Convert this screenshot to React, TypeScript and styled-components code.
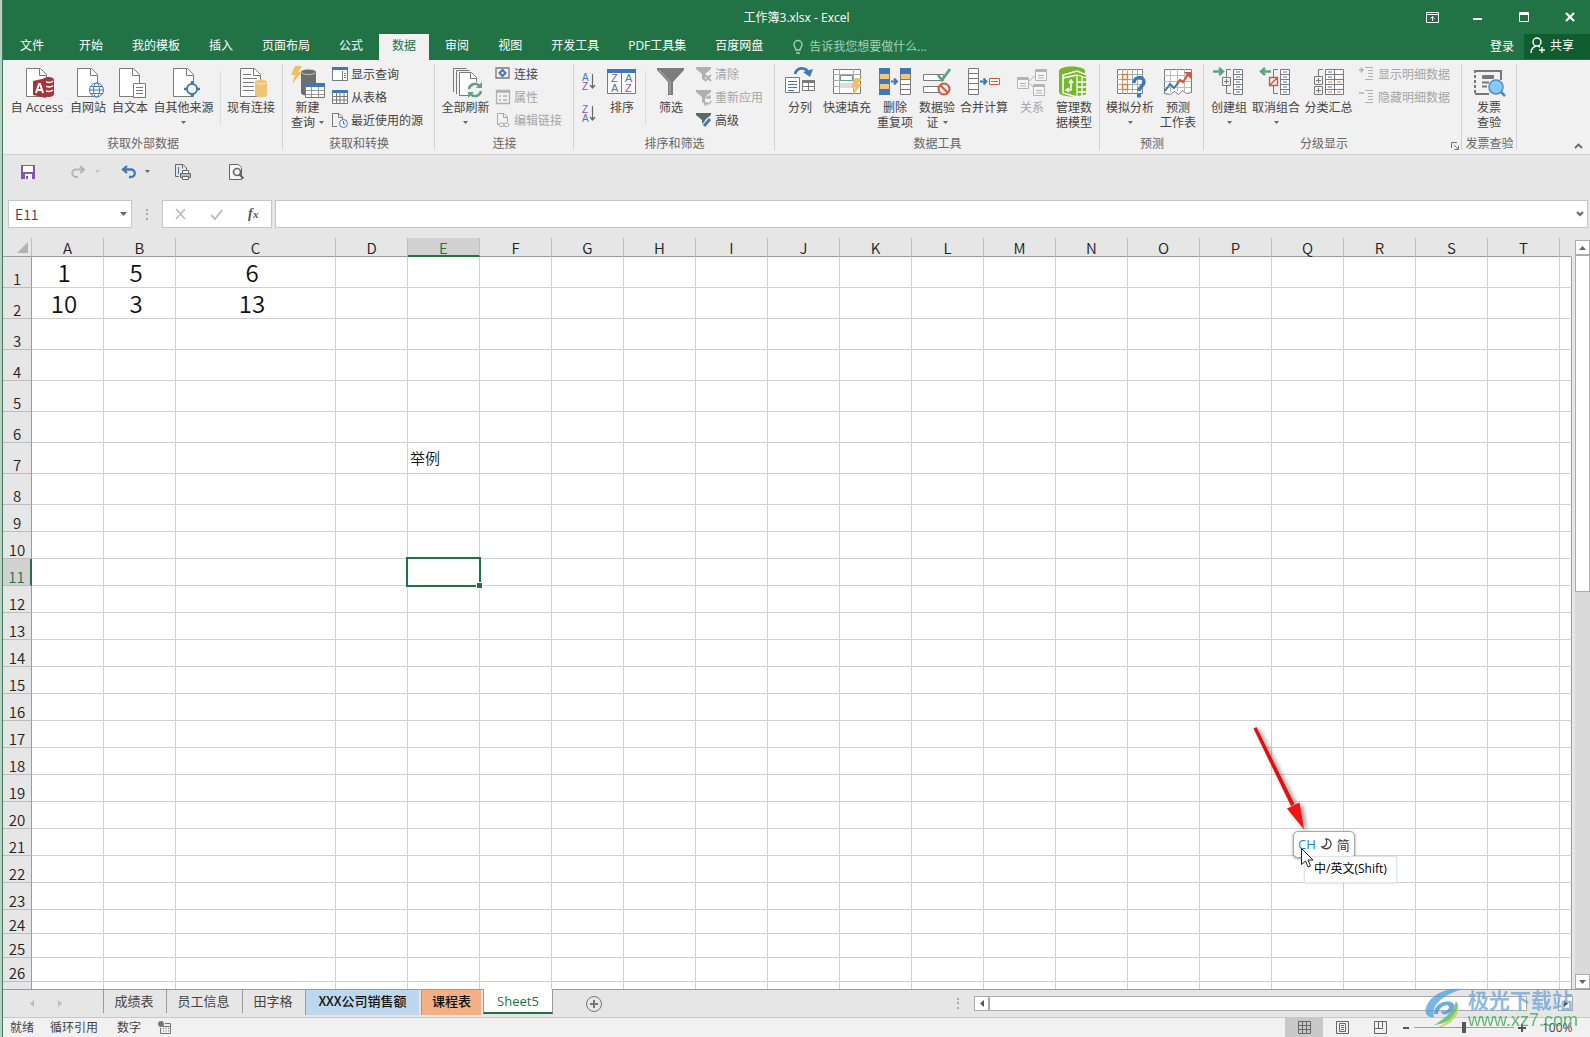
import React from "react";
import styled, { createGlobalStyle, css } from "styled-components";

const UI_FONT = '"Open Sans", "Noto Sans CJK SC", sans-serif';
const CELL_FONT = '"Noto Sans CJK SC", sans-serif';
const GREEN = "#217346";
const GRAY = "#7a7a7a";
const BLUE = "#3f78b8";

const GlobalStyle = createGlobalStyle`
  *, *::before, *::after { box-sizing: border-box; }
  body { margin: 0; font-family: ${UI_FONT}; font-size: 12px; color: #444; background: #e6e6e6; }
  button, input { font: inherit; color: inherit; margin: 0; padding: 0; border: 0; background: none; outline: none; }
  svg { display: block; overflow: visible; flex: none; }
`;

const Window = styled.div`
  position: relative;
  display: flex;
  flex-direction: column;
  height: 100vh;
  overflow: hidden;
  background: #e6e6e6;
  border-left: 1px solid #3f7a5a;
  margin-left: 2px;
`;
const Edge = styled.div`
  background: #bccfc4;
`;

/* Title bar */
const TitleBar = styled.header`
  display: grid;
  grid-template-columns: 1fr auto 1fr;
  align-items: center;
  height: 34px;
  background: ${GREEN};
  color: #fff;
`;
const Title = styled.h1`
  grid-column: 2;
  margin: 0;
  font-size: 12px;
  font-weight: 400;
`;
const WindowButtons = styled.div`
  display: flex;
  justify-content: flex-end;
  gap: 16px;
  padding-right: 5px;
`;
const WindowButton = styled.button`
  display: grid;
  place-items: center;
  width: 30px;
  height: 32px;
`;

/* Tab strip */
const TabStrip = styled.nav`
  display: flex;
  height: 26px;
  background: ${GREEN};
  color: #fff;
`;
const Tab = styled.button<{ $active?: boolean; $file?: boolean }>`
  padding: ${(p) => (p.$file ? "0 19px 2px 17px" : "0 13px 2px")};
  margin-right: 3px;
  line-height: 22px;
  white-space: nowrap;
  ${(p) => p.$active && css`background: #f1f1f1; color: ${GREEN};`}
`;
const TellMe = styled.label`
  display: flex;
  flex: 1;
  align-items: center;
  gap: 6px;
  padding-left: 14px;
  color: #a5d0b6;
  input { width: 160px; line-height: 18px; }
  input::placeholder { color: #a5d0b6; opacity: 1; }
`;
const SignIn = styled.button`
  padding: 0 10px 2px;
`;
const Share = styled.button`
  display: flex;
  align-items: center;
  gap: 4px;
  width: 66px;
  height: 25px;
  padding: 0 6px 3px;
  background: #0f5c2f;
`;

/* Ribbon */
const Ribbon = styled.section`
  display: flex;
  background: #f1f1f1;
  border-bottom: 1px solid #d0d0d0;
`;
const GroupBox = styled.div`
  position: relative;
  display: flex;
  flex-direction: column;
  flex: none;
  &::after {
    content: "";
    position: absolute;
    right: 0;
    top: 4px;
    bottom: 4px;
    width: 1px;
    background: #d2d2d2;
  }
`;
const GroupBody = styled.div<{ $pad: number; $end: number }>`
  display: flex;
  height: 76px;
  padding: 0 ${(p) => p.$end}px 0 ${(p) => p.$pad}px;
`;
const GroupLabel = styled.div<{ $launcher?: boolean }>`
  height: 18px;
  padding-right: ${(p) => (p.$launcher ? 18 : 0)}px;
  line-height: 16px;
  text-align: center;
  color: #666;
  white-space: nowrap;
`;
const Big = styled.button<{ $w: number }>`
  display: flex;
  flex-direction: column;
  align-items: center;
  width: ${(p) => p.$w}px;
  padding-top: 6px;
  white-space: nowrap;
  color: #444;
  &:disabled { color: #a6a6a6; }
`;
const BigLabel = styled.span`
  display: flex;
  flex-direction: column;
  align-items: center;
  margin-top: 2px;
  line-height: 15px;
`;
const Line = styled.span`
  display: flex;
  align-items: center;
  gap: 4px;
  height: 15px;
`;
const SmallColumn = styled.div`
  display: flex;
  flex-direction: column;
  padding: 2px 0 0 4px;
`;
const Small = styled.button`
  display: flex;
  align-items: center;
  gap: 3px;
  height: 23px;
  white-space: nowrap;
  color: #444;
  &:disabled { color: #a6a6a6; }
`;
const InnerRule = styled.div`
  width: 1px;
  height: 54px;
  margin: 11px 4px 0;
  background: #dcdcdc;
`;
const SortPair = styled.div`
  display: flex;
  flex-direction: column;
  gap: 12px;
  padding: 11px 6px 0 4px;
`;
const Launcher = styled.button`
  position: absolute;
  right: 3px;
  bottom: 4px;
`;
const Collapse = styled.button`
  margin-left: auto;
  align-self: flex-end;
  padding: 0 7px 5px 0;
`;

/* Quick access + formula bar */
const QuickAccess = styled.div`
  display: flex;
  align-items: center;
  height: 45px;
  padding: 0 0 12px 18px;
`;
const QuickButton = styled.button<{ $after: number }>`
  display: flex;
  align-items: center;
  gap: 9px;
  margin-right: ${(p) => p.$after}px;
`;
const FormulaBar = styled.div`
  display: flex;
  align-items: stretch;
  height: 38px;
  padding: 0 2px 10px 5px;
`;
const Field = styled.div`
  display: flex;
  align-items: center;
  background: #fff;
  border: 1px solid #c6c6c6;
`;
const NameBox = styled(Field)`
  justify-content: space-between;
  width: 124px;
  padding: 0 4px 0 6px;
  input { width: 102px; height: 24px; padding-bottom: 1px; font: 14px ${CELL_FONT}; font-weight: 350; color: #444; }
`;
const Dots = styled.div`
  display: grid;
  place-items: center;
  width: 30px;
`;
const FxBox = styled(Field)`
  justify-content: space-between;
  width: 110px;
  padding: 0 11px 0 12px;
  margin-right: 3px;
`;
const FormulaInput = styled(Field)`
  flex: 1;
  padding-right: 3px;
  input { flex: 1; font: 14px ${CELL_FONT}; }
`;

/* Sheet */
const Sheet = styled.main`
  display: flex;
  flex: 1;
  min-height: 0;
  overflow: hidden;
`;
const GridArea = styled.div`
  flex: 1;
  min-width: 0;
  overflow: hidden;
`;
const Grid = styled.table`
  width: 100%;
  table-layout: fixed;
  border-collapse: separate;
  border-spacing: 0;
  font-family: ${CELL_FONT};
  font-size: 15px;
  color: #111;
`;
const Col = styled.col<{ $w?: number }>`
  width: ${(p) => (p.$w ? `${p.$w}px` : "auto")};
`;
const HeadCell = styled.th<{ $on?: boolean; $bare?: boolean }>`
  height: 19px;
  padding: 2px 0 0;
  font-weight: 350;
  line-height: 15px;
  vertical-align: top;
  color: ${(p) => (p.$on ? GREEN : "#222")};
  background: ${(p) => (p.$on ? "#d2d2d2" : "#e6e6e6")};
  border-bottom: ${(p) => (p.$on ? `2px solid ${GREEN}` : "1px solid #9b9b9b")};
  border-right: 1px solid ${(p) => (p.$bare ? "transparent" : "#bdbdbd")};
  svg { margin: 2px 0 0 14px; }
`;
const Row = styled.tr<{ $h: number }>`
  height: ${(p) => p.$h}px;
`;
const RowHead = styled.th<{ $on?: boolean }>`
  padding: 0;
  font-weight: 350;
  line-height: 16px;
  vertical-align: bottom;
  text-align: center;
  color: ${(p) => (p.$on ? GREEN : "#222")};
  background: ${(p) => (p.$on ? "#d2d2d2" : "#e6e6e6")};
  border-bottom: 1px solid #bdbdbd;
  border-right: ${(p) => (p.$on ? `2px solid ${GREEN}` : "1px solid #9b9b9b")};
`;
const Cell = styled.td<{ $big?: boolean }>`
  position: relative;
  padding: 0 ${(p) => (p.$big ? "7px 0 0" : "0 0 2px")};
  text-align: ${(p) => (p.$big ? "center" : "left")};
  font-size: ${(p) => (p.$big ? 24 : 15)}px;
  font-weight: 350;
  line-height: ${(p) => (p.$big ? 30 : 18)}px;
  vertical-align: middle;
  background: #fff;
  border-bottom: 1px solid #d0d0d0;
  border-right: 1px solid #d0d0d0;
  &:last-child { border-right-color: #9b9b9b; }
`;
const Selection = styled.div`
  position: absolute;
  z-index: 1;
  inset: -2px;
  border: 2px solid ${GREEN};
  &::after {
    content: "";
    position: absolute;
    right: -4px;
    bottom: -4px;
    width: 7px;
    height: 7px;
    background: ${GREEN};
    border: 1px solid #fff;
  }
`;
const VScroll = styled.div`
  display: flex;
  flex-direction: column;
  width: 15px;
  margin: 2px 0 0 3px;
  background: #dadada;
`;
const ScrollButton = styled.button`
  display: grid;
  place-items: center;
  flex: none;
  width: 15px;
  height: 15px;
  background: #fff;
  border: 1px solid #ababab;
`;
const VThumb = styled.div`
  flex: 0 0 45%;
  background: #fff;
  border: 1px solid #ababab;
`;
const Spacer = styled.div`
  flex: 1;
`;

/* Sheet tabs */
const SheetBar = styled.footer`
  display: flex;
  height: 28px;
  border-top: 1px solid #9b9b9b;
  font-size: 13px;
`;
const SheetNav = styled.div`
  display: flex;
  align-items: center;
  gap: 24px;
  width: 100px;
  height: 27px;
  padding: 0 0 1px 27px;
`;
const SheetTab = styled.button<{ $w: number; $tint?: string; $active?: boolean }>`
  width: ${(p) => p.$w}px;
  height: ${(p) => (p.$active ? 25 : 23)}px;
  padding: 0 2px 2px 0;
  line-height: 18px;
  white-space: nowrap;
  border-left: 1px solid #9b9b9b;
  ${(p) => p.$tint && css`
    height: 25px;
    padding: 0 0 4px;
    color: #111;
    font-family: ${CELL_FONT};
    font-weight: 500;
    border-right: 2px solid #e6e6e6;
    background: ${p.$tint};
  `}
  ${(p) => p.$active && css`
    position: relative;
    top: -1px;
    padding: 0;
    color: ${GREEN};
    background: #fff;
    border-right: 1px solid #9b9b9b;
    border-bottom: 2px solid ${GREEN};
  `}
`;
const AddSheet = styled.button`
  margin-left: 33px;
  height: 27px;
`;
const HScroll = styled.div`
  display: flex;
  align-items: center;
  width: 633px;
  height: 27px;
  margin-left: auto;
  padding-right: 17px;
`;
const HGrip = styled.div`
  width: 17px;
`;
const HThumb = styled.div`
  flex: 0 0 538px;
  height: 15px;
  background: #fff;
  border: 1px solid #ababab;
`;

/* Status bar */
const StatusBar = styled.footer`
  display: flex;
  align-items: center;
  height: 20px;
  padding-left: 7px;
  background: #f1f1f1;
  border-top: 1px solid #c8c8c8;
`;
const StatusText = styled.span<{ $after: number }>`
  margin-right: ${(p) => p.$after}px;
  line-height: 18px;
`;
const ViewButton = styled.button<{ $on?: boolean }>`
  display: grid;
  place-items: center;
  width: 38px;
  height: 19px;
  background: ${(p) => (p.$on ? "#c8c8c8" : "transparent")};
`;
const ZoomGroup = styled.div`
  display: flex;
  align-items: center;
  gap: 2px;
  padding: 0 16px 0 1px;
`;
const ZoomStep = styled.button`
  width: 12px;
  display: grid;
  place-items: center;
`;
const ZoomSlider = styled.input`
  width: 100px;
  height: 12px;
  appearance: none;
  background: linear-gradient(#9b9b9b, #9b9b9b) center / 100% 1px no-repeat;
  &::-webkit-slider-thumb { appearance: none; width: 4px; height: 11px; background: #555; }
`;
const ZoomValue = styled.span`
  margin-left: 12px;
  width: 32px;
`;

/* Floating items over the sheet */
const Arrow = styled.svg`
  position: absolute;
  left: 1248px;
  top: 724px;
  filter: drop-shadow(3px 2px 2px rgba(0, 0, 0, 0.45));
`;
const ImeBar = styled.div`
  position: absolute;
  left: 1290px;
  top: 831px;
  display: flex;
  align-items: center;
  gap: 5px;
  width: 62px;
  height: 27px;
  padding: 0 4px 1px;
  font-size: 13px;
  color: #333;
  background: #fff;
  border: 1px solid #a8a8a8;
  border-radius: 5px;
  box-shadow: 0 1px 3px rgba(0, 0, 0, 0.4);
`;
const ImeMode = styled.span`
  color: #1a86d8;
`;
const ImeTip = styled.div`
  position: absolute;
  left: 1301px;
  top: 856px;
  height: 27px;
  padding: 0 9px;
  line-height: 24px;
  color: #000;
  white-space: nowrap;
  background: #fff;
  border: 1px solid #dfe3ea;
  box-shadow: 0 1px 2px rgba(0, 0, 0, 0.1);
`;
const Pointer = styled.svg`
  position: absolute;
  left: 1298px;
  top: 848px;
`;
const Watermark = styled.div`
  position: absolute;
  right: 12px;
  bottom: 7px;
  display: flex;
  gap: 1px;
  opacity: 0.75;
  pointer-events: none;
`;
const WatermarkText = styled.div`
  display: flex;
  flex-direction: column;
  font: 700 21px/22px "Noto Sans CJK SC", sans-serif;
  color: #6fa3d8;
  span:last-child { font: 18px/20px "Liberation Sans", sans-serif; color: #2fa84f; }
`;

/* ---------- icons ---------- */

const Caret = ({ color = "#666" }: { color?: string }) => (
  <svg width="5" height="3" viewBox="0 0 5 3"><path d="M0 0h5L2.5 3z" fill={color} /></svg>
);
const I32 = ({ children }: { children: React.ReactNode }) => (
  <svg width="32" height="32" viewBox="0 0 32 32" fill="none" stroke={GRAY}>{children}</svg>
);
const I16 = ({ children, color = GRAY }: { children: React.ReactNode; color?: string }) => (
  <svg width="16" height="16" viewBox="0 0 16 16" fill="none" stroke={color}>{children}</svg>
);
const Page = () => (
  <>
    <path d="M5.500 2.500h14l6 6v22h-20z" fill="#fff" />
    <path d="M18.500 2.500v7h7" />
  </>
);
const Bolt = ({ x, y }: { x: number; y: number }) => (
  <path transform={`translate(${x} ${y})`} d="M4 0h7L7 6h4L1 18l3-9H0z" fill="#f0bd6a" stroke="none" />
);

const icons = {
  access: (
    <I32>
      <Page />
      <path d="M22 14c0-4 11-4 11 0v14c0 4-11 4-11 0z" fill="#a4373a" stroke="none" />
      <path d="M24 15c2 2 6 2 8 0M24 19.500c2 2 6 2 8 0M24 24c2 2 6 2 8 0" stroke="#fff" strokeWidth="1.300" />
      <path d="M12 15l13-3v20l-13-3z" fill="#a4373a" stroke="none" />
      <path d="M15 27l3-9h1l3 9M16 24h5" stroke="#fff" strokeWidth="2" />
    </I32>
  ),
  web: (
    <I32>
      <Page />
      <g stroke={BLUE}><circle cx="24.500" cy="24" r="7" fill="#fff" /><ellipse cx="24.500" cy="24" rx="3" ry="7" /><path d="M17.500 24h14M18.500 20.500h12M18.500 27.500h12" /></g>
    </I32>
  ),
  text: (
    <I32><Page /><path d="M19.500 17.500h12v14h-12z" fill="#fff" /><path d="M22 21.500h7M22 24.500h7M22 27.500h7" /></I32>
  ),
  other: (
    <I32>
      <Page />
      <circle cx="24" cy="23" r="5" fill="#fff" stroke={BLUE} strokeWidth="2" />
      <path d="M24 15v4M24 27v4M16 23h4M28 23h4" stroke={BLUE} strokeWidth="2.500" />
    </I32>
  ),
  existing: (
    <I32>
      <Page />
      <path d="M8 8.500h8M8 12.500h14M8 16.500h11M8 20.500h11M8 24.500h11" />
      <path d="M20 16c0-3 12-3 12 0v13c0 3-12 3-12 0z" fill="#eec576" stroke="none" />
      <path d="M21 17c3 1.500 7 1.500 10 0" stroke="#fbe6bd" />
    </I32>
  ),
  newQuery: (
    <I32>
      <path d="M9 6c0-3.500 15-3.500 15 0v21c0 3.500-15 3.500-15 0z" fill="#6e6e6e" stroke="none" />
      <path d="M10 7c3 2 10 2 13 0" stroke="#ccc" />
      <Bolt x={-1} y={0} />
      <path d="M13.500 17.500h19v14h-19z" fill="#fff" />
      <path d="M13 17h20v4H13z" fill={BLUE} stroke="none" />
      <path d="M14 24.500h18M14 28.500h18M19.500 21v10M26.500 21v10" stroke="#999" />
    </I32>
  ),
  refresh: (
    <I32>
      <path d="M3.500 26V2.500h13M6.500 28V4.500h13" />
      <path d="M9.500 6.500h12l5 5v18h-17z" fill="#fff" /><path d="M20.500 6.500v6h6" />
      <circle cx="25" cy="24" r="8" fill="#f1f1f1" stroke="none" />
      <path d="M19 23a6 6 0 0 1 10-3.500M31 25a6 6 0 0 1-10 3.500" stroke="#5fa283" strokeWidth="2.400" />
      <path d="M32 16v6h-6zM18 32v-6h6z" fill="#5fa283" stroke="none" />
    </I32>
  ),
  sort: (
    <I32>
      <path d="M1.500 3.500h28v24h-28z" fill="#fff" />
      <path d="M1 3h29v4H1z" fill={BLUE} stroke="none" />
      <path d="M15.500 7v20" />
      <g fontFamily="Liberation Sans" fontSize="11" stroke="none">
        <text x="5" y="16" fill="#9650b4">Z</text><text x="19" y="16" fill={BLUE}>A</text>
        <text x="5" y="26" fill={BLUE}>A</text><text x="19" y="26" fill="#9650b4">Z</text>
      </g>
    </I32>
  ),
  filter: (
    <I32><path d="M2 2h27v2L18 16v13h-5V16L2 4z" fill="#7c7c7c" stroke="none" /><path d="M4 4l11 11.500V28" stroke="#b5b5b5" /></I32>
  ),
  split: (
    <I32>
      <path d="M11 8c2-7 11-8 14 0" stroke={BLUE} strokeWidth="2.600" /><path d="M19 6l7 5 3-8z" fill={BLUE} stroke="none" />
      <path d="M1.500 11.500h14v15h-14z" fill="#fff" /><path d="M4 15.500h9M4 18.500h9M4 21.500h9M4 24.500h6" stroke={BLUE} />
      <path d="M18.500 14.500h12v10h-12z" fill="#fff" /><path d="M18 14h13v3H18z" fill={GRAY} stroke="none" /><path d="M19 20.500h11M24.500 17v7" />
    </I32>
  ),
  flash: (
    <I32>
      <path d="M2.500 3.500h27v24h-27z" fill="#fff" /><path d="M2 8.500h28M2 14.500h28M2 20.500h28M8.500 3v24M22.500 3v24" stroke="#aaa" />
      <path d="M9.500 9.500h12v5h-12z" stroke="#5fa283" /><path d="M9 17h13v5H9z" fill="#ddd" stroke="none" />
      <Bolt x={20} y={12} />
    </I32>
  ),
  dedupe: (
    <I32>
      <path d="M.500 2.500h10v26h-10zM21.500 2.500h10v26h-10z" fill="#fff" />
      <path d="M0 2h11v6H0zM0 13h11v5H0zM0 23h11v6H0zM21 2h11v6H21z" fill={BLUE} stroke="none" />
      <path d="M1 8h9v5H1zM1 18h9v5H1zM22 8h9v5h-9z" fill="#f0c77f" stroke="none" />
      <path d="M22 13.500h9M22 18.500h9M22 23.500h9" />
      <path d="M12 15.500h6M15 12.500l3 3-3 3" stroke={BLUE} strokeWidth="2" />
    </I32>
  ),
  validate: (
    <I32>
      <path d="M2.500 8.500h20v6h-20zM2.500 20.500h16v6h-16z" fill="#fff" />
      <path d="M17 9l4 5 8-11" stroke="#5fa283" strokeWidth="2.800" />
      <circle cx="23" cy="23" r="5.500" stroke="#d0583e" strokeWidth="2" fill="#f1f1f1" /><path d="M19 19l8 8" stroke="#d0583e" strokeWidth="2" />
    </I32>
  ),
  consolidate: (
    <I32>
      <path d="M.500 2.500h10v26h-10z" fill="#fff" /><path d="M0 7.500h11M0 12.500h11M0 17.500h11M0 23.500h11" />
      <path d="M12 15.500h6M15.500 12.500l3 3-3 3" stroke={BLUE} strokeWidth="2" />
      <path d="M21.500 12.500h10v6h-10z" stroke="#d0583e" fill="#fff" /><path d="M23 15.500h7" stroke="#d0583e" />
    </I32>
  ),
  relations: (
    <I32>
      <g stroke="#b4b4b4">
        <path d="M13 15l7-6M13 17l5 5" />
        <path d="M1.500 11.500h11v11h-11zM19.500 3.500h11v11h-11zM17.500 18.500h11v11h-11z" fill="#f6f6f6" />
        <path d="M1 12.500h12M1 13.500h12M19 4.500h12M19 5.500h12M17 19.500h12M17 20.500h12M4 17.500h6M4 20h6M22 9.500h6M22 12h6M20 24.500h6M20 27h6" />
      </g>
    </I32>
  ),
  model: (
    <I32>
      <path d="M1 5c0-6 26-6 26 0v21c0 6-26 6-26 0z" fill="#76b82a" stroke="none" />
      <path d="M5 9l14-4 10 4v20l-10 2-14-4z" fill="#76b82a" stroke="#fff" strokeWidth="1.500" />
      <path d="M19 9v22M19 9l10 3M19 9L5 12M19 16h10M19 21h10M19 26h10M24 11v19" stroke="#fff" strokeWidth="1.300" />
      <path d="M9 24h4V15M11 17l2-3 2 3M11 22l-3 2 3 2" stroke="#fff" strokeWidth="1.500" />
    </I32>
  ),
  whatIf: (
    <I32>
      <path d="M3.500 3.500h25v24h-25z" fill="#fff" /><path d="M8.500 3v25M13.500 3v25M18.500 3v25M23.500 3v25M3 8.500h26M3 13.500h26M3 18.500h26M3 23.500h26" stroke="#aaa" />
      <path d="M8.500 8.500h5v5h-5zM8.500 18.500h5v5h-5z" stroke="#e07b39" strokeWidth="1.400" />
      <path d="M20 17c0-7 10-7 10-1 0 4-5 4-5 9" stroke={BLUE} strokeWidth="3.500" /><path d="M23 27.500h4v4h-4z" fill={BLUE} stroke="none" />
    </I32>
  ),
  forecast: (
    <I32>
      <path d="M2.500 3.500h27v23l-5 1-4-3-4 4-4-3-4 3-6-1z" fill="#fff" /><path d="M2 9.500h27M2 15.500h27M2 21.500h27M8.500 3v24M15.500 3v22M22.500 3v22" stroke="#bbb" />
      <path d="M3 25l5-7 4 4 4-5" stroke={BLUE} strokeWidth="2" /><path d="M15 18l3-4 3 2 6-9" stroke="#d0583e" strokeWidth="2.200" /><path d="M22 6h7v7z" fill="#d0583e" stroke="none" />
    </I32>
  ),
  group: (
    <I32>
      <path d="M0 5.500h9M6 2l4 3.500L6 9" stroke="#5fa283" strokeWidth="2.400" />
      <path d="M18 3.500h-4.500V11M13.500 20v7.500H18M9.500 11.500h8v8h-8zM11 15.500h5M13.500 13v5" />
      <path d="M20.500 3.500h9v25h-9z" fill="#fff" /><path d="M20 8.500h10M20 13.500h10M20 18.500h10M20 23.500h10" />
      <path d="M23 6h4M23 11h4M23 16h4M23 21h4M23 26h4" stroke={BLUE} />
    </I32>
  ),
  ungroup: (
    <I32>
      <path d="M1 5.500h10M5 2L1 5.500 5 9" stroke="#5fa283" strokeWidth="2.400" />
      <path d="M18 3.500h-4.500V11M13.500 20v7.500H18" /><path d="M9.500 11.500h8v8h-8zM10 19l7-7" stroke="#d0583e" strokeWidth="1.400" />
      <path d="M20.500 3.500h9v25h-9z" fill="#fff" /><path d="M20 8.500h10M20 13.500h10M20 18.500h10M20 23.500h10" />
      <path d="M23 6h4M23 11h4M23 16h4M23 21h4M23 26h4" stroke={BLUE} />
    </I32>
  ),
  subtotal: (
    <I32>
      <path d="M10 3.500H5.500V10M1.500 10.500h8v8h-8zM3 14.500h5M5.500 12v5M1.500 20.500h8v8h-8zM3 24.500h5M5.500 22v5" />
      <path d="M12.500 3.500h18v25h-18z" fill="#fff" /><path d="M12 8.500h19M12 13.500h19M12 18.500h19M12 23.500h19M21.500 3v25" />
      <path d="M15 6h4M15 11h4M15 21h4" stroke={BLUE} /><path d="M15 16h4M24 16h4M15 26h4M24 26h4" stroke="#e07b39" />
    </I32>
  ),
  invoice: (
    <I32>
      <path d="M28 14V5H2M2 28h14" strokeWidth="2" stroke="#777" /><path d="M2 4v24" strokeWidth="2" stroke="#777" strokeDasharray="3 2" />
      <rect x="9" y="9" width="12" height="4" rx="1" fill="#777" stroke="none" /><path d="M9 16.500h7M9 20.500h5" strokeWidth="2" />
      <circle cx="23" cy="21" r="7" fill="#8cc8ff" stroke="#4a8cc8" strokeWidth="1.500" /><path d="M28 26l4 4" stroke="#4a8cc8" strokeWidth="2.500" />
    </I32>
  ),
};

const smallFunnel = "M0 1h15v2L9 8v7l-3-2V8L0 3z";
const smallIcons = {
  showQuery: <I16><path d="M.500 1.500h15v13H.500z" fill="#fff" /><path d="M0 1h16v3H0z" fill={BLUE} stroke="none" /><path d="M10.500 5v9M12 7.500h2M12 9.500h2M12 11.500h2" /></I16>,
  fromTable: <I16><path d="M.500 1.500h15v13H.500z" fill="#fff" /><path d="M0 1h16v3H0z" fill={BLUE} stroke="none" /><path d="M0 7.500h16M0 11H16M4.500 4v10M8 4v10M12 4v10" /></I16>,
  recent: <I16><path d="M5 14.500H.500V1.500H7L10.500 5v2M6.500 1.500v4h4" /><circle cx="11.500" cy="11.500" r="4" stroke={BLUE} fill="#fff" /><path d="M11.500 9v3h2" stroke={BLUE} /></I16>,
  links: <I16><path d="M1 2h13v10H1z" strokeWidth="1.300" /><path d="M7.500 4l3 3-3 3-3-3z" stroke={BLUE} strokeWidth="2" /></I16>,
  props: <I16 color="#b0b0b0"><path d="M1.500 1.500h13v13h-13zM1 3h13" strokeWidth="1.300" /><path d="M4 7h2M8 7h4M4 11h2M8 11h4" strokeWidth="1.500" /></I16>,
  editLinks: <I16 color="#a8a8a8"><path d="M4 12.500H2.500V1.500H9L12.500 5v5M8.500 1.500v4h4" /><rect x="4" y="11" width="5" height="3.500" rx="1.700" /><rect x="9" y="11" width="5" height="3.500" rx="1.700" /></I16>,
  clear: <I16 color="#b0b0b0"><path d={smallFunnel} fill="#b0b0b0" stroke="none" /><path d="M9 9l6 6M15 9l-6 6" strokeWidth="2" /></I16>,
  reapply: <I16 color="#b0b0b0"><path d={smallFunnel} fill="#b0b0b0" stroke="none" /><path d="M8 11a3.500 3.500 0 0 1 6-2M15 12a3.500 3.500 0 0 1-6 2M14 6v3h-3M9 17v-3h3" strokeWidth="1.400" /></I16>,
  advanced: <I16><path d={smallFunnel} fill="#5a6b60" stroke="none" /><path d="M7 15l7-8" stroke="#f1f1f1" strokeWidth="5" /><path d="M8 14l6-7" stroke={BLUE} strokeWidth="3" /></I16>,
  showDetail: <I16 color="#b0b0b0"><path d="M0 4h5M2.500 1.500v5" strokeWidth="1.500" /><path d="M6 1.500h8M9 4.500h5M9 7.500h5M9 10.500h5M6 13.500h8" /></I16>,
  hideDetail: <I16 color="#b0b0b0"><path d="M0 4h5" strokeWidth="1.500" /><path d="M6 1.500h8M9 4.500h5M9 7.500h5M9 10.500h5M6 13.500h8" /></I16>,
};

const SortGlyph = ({ top, bottom }: { top: string; bottom: string }) => {
  const tint = (l: string) => (l === "A" ? BLUE : "#9650b4");
  return (
    <svg width="16" height="20" viewBox="0 0 16 20" fill="none">
      <g fontFamily="Liberation Sans" fontSize="10">
        <text x="1" y="10" fill={tint(top)}>{top}</text>
        <text x="1" y="19" fill={tint(bottom)}>{bottom}</text>
      </g>
      <path d="M11.500 3v14M9 14l2.500 3 2.500-3" stroke="#666" strokeWidth="1.200" />
    </svg>
  );
};

/* ---------- ribbon parts ---------- */

type BigProps = { w: number; icon: React.ReactNode; lines: string[]; caret?: boolean; disabled?: boolean };
const BigButton = ({ w, icon, lines, caret, disabled }: BigProps) => (
  <Big $w={w} disabled={disabled}>
    {icon}
    <BigLabel>
      {lines.map((t, i) => (
        <Line key={i}>{t}{caret && i === 1 && <Caret />}</Line>
      ))}
      {caret && lines.length === 1 && <Line><Caret /></Line>}
    </BigLabel>
  </Big>
);
const SmallButton = ({ icon, children, disabled }: { icon: React.ReactNode; children: string; disabled?: boolean }) => (
  <Small disabled={disabled}>{icon}{children}</Small>
);
type GroupProps = { label: string; pad: number; end: number; launcher?: boolean; children: React.ReactNode };
const Group = ({ label, pad, end, launcher, children }: GroupProps) => (
  <GroupBox>
    <GroupBody $pad={pad} $end={end}>{children}</GroupBody>
    <GroupLabel $launcher={launcher}>{label}</GroupLabel>
    {launcher && (
      <Launcher aria-label={`${label}设置`}>
        <svg width="8" height="8" viewBox="0 0 8 8" fill="none" stroke="#777"><path d="M.500 6V.500H6M3 3l4 4M7.500 3.500v4h-4" /></svg>
      </Launcher>
    )}
  </GroupBox>
);

/* ---------- data ---------- */

const tabs = ["文件", "开始", "我的模板", "插入", "页面布局", "公式", "数据", "审阅", "视图", "开发工具", "PDF工具集", "百度网盘"];
const columns = "ABCDEFGHIJKLMNOPQRST".split("");
const rowHeight = (n: number) => (n <= 8 ? 31 : n <= 23 ? 27 : 24);
const values: Record<string, string> = { A1: "1", B1: "5", C1: "6", A2: "10", B2: "3", C2: "13", E7: "举例" };
const sheets: { name: string; w: number; tint?: string; active?: boolean }[] = [
  { name: "成绩表", w: 63 },
  { name: "员工信息", w: 76 },
  { name: "田字格", w: 63 },
  { name: "XXX公司销售额", w: 116, tint: "#bdd7ee" },
  { name: "课程表", w: 62, tint: "#f4b084" },
  { name: "Sheet5", w: 70, active: true },
];

export default function App() {
  return (
    <Edge>
      <GlobalStyle />
      <Window>
        <TitleBar>
          <Title>工作簿3.xlsx - Excel</Title>
          <WindowButtons>
            <WindowButton aria-label="功能区显示选项">
              <svg width="13" height="11" viewBox="0 0 13 11" fill="none" stroke="#fff"><path d="M.500.500h12v10H.500zM0 2.500h13M6.500 9V4.500M4.500 6.500l2-2 2 2" /></svg>
            </WindowButton>
            <WindowButton aria-label="最小化">
              <svg width="10" height="10" viewBox="0 0 10 10"><path d="M0 6h9v2H0z" fill="#fff" /></svg>
            </WindowButton>
            <WindowButton aria-label="最大化">
              <svg width="10" height="10" viewBox="0 0 10 10" fill="none" stroke="#fff"><path d="M.500.500h9v9h-9zM0 1.500h10M0 2.500h10" /></svg>
            </WindowButton>
            <WindowButton aria-label="关闭">
              <svg width="10" height="10" viewBox="0 0 10 10" stroke="#fff" strokeWidth="2.200"><path d="M1 1l8 8M9 1L1 9" /></svg>
            </WindowButton>
          </WindowButtons>
        </TitleBar>

        <TabStrip>
          {tabs.map((t) => (
            <Tab key={t} $file={t === "文件"} $active={t === "数据"}>{t}</Tab>
          ))}
          <TellMe>
            <svg width="10" height="14" viewBox="0 0 10 14" fill="none" stroke="#a5d0b6" strokeWidth="1.400"><path d="M3 10C3 8 1 7 1 4.500a4 4 0 0 1 8 0C9 7 7 8 7 10zM3 13h4" /></svg>
            <input aria-label="告诉我您想要做什么" placeholder="告诉我您想要做什么..." />
          </TellMe>
          <SignIn>登录</SignIn>
          <Share>
            <svg width="16" height="16" viewBox="0 0 16 16" fill="none" stroke="#fff" strokeWidth="1.400"><circle cx="7" cy="5" r="4" /><path d="M1 16c0-4 2-6 5-7M8 9l2 1M9 13h6M12 10v6" /></svg>
            共享
          </Share>
        </TabStrip>

        <Ribbon>
          <Group label="获取外部数据" pad={4} end={6}>
            <BigButton w={60} icon={icons.access} lines={["自 Access"]} />
            <BigButton w={42} icon={icons.web} lines={["自网站"]} />
            <BigButton w={42} icon={icons.text} lines={["自文本"]} />
            <BigButton w={65} icon={icons.other} lines={["自其他来源"]} caret />
            <InnerRule />
            <BigButton w={52} icon={icons.existing} lines={["现有连接"]} />
          </Group>
          <Group label="获取和转换" pad={4} end={12}>
            <BigButton w={41} icon={icons.newQuery} lines={["新建", "查询"]} caret />
            <SmallColumn>
              <SmallButton icon={smallIcons.showQuery}>显示查询</SmallButton>
              <SmallButton icon={smallIcons.fromTable}>从表格</SmallButton>
              <SmallButton icon={smallIcons.recent}>最近使用的源</SmallButton>
            </SmallColumn>
          </Group>
          <Group label="连接" pad={5} end={12}>
            <BigButton w={51} icon={icons.refresh} lines={["全部刷新"]} caret />
            <SmallColumn>
              <SmallButton icon={smallIcons.links}>连接</SmallButton>
              <SmallButton icon={smallIcons.props} disabled>属性</SmallButton>
              <SmallButton icon={smallIcons.editLinks} disabled>编辑链接</SmallButton>
            </SmallColumn>
          </Group>
          <Group label="排序和筛选" pad={3} end={12}>
            <SortPair>
              <SortGlyph top="A" bottom="Z" />
              <SortGlyph top="Z" bottom="A" />
            </SortPair>
            <BigButton w={38} icon={icons.sort} lines={["排序"]} />
            <InnerRule />
            <BigButton w={42} icon={icons.filter} lines={["筛选"]} />
            <SmallColumn>
              <SmallButton icon={smallIcons.clear} disabled>清除</SmallButton>
              <SmallButton icon={smallIcons.reapply} disabled>重新应用</SmallButton>
              <SmallButton icon={smallIcons.advanced}>高级</SmallButton>
            </SmallColumn>
          </Group>
          <Group label="数据工具" pad={6} end={7}>
            <BigButton w={38} icon={icons.split} lines={["分列"]} />
            <BigButton w={56} icon={icons.flash} lines={["快速填充"]} />
            <BigButton w={40} icon={icons.dedupe} lines={["删除", "重复项"]} />
            <BigButton w={44} icon={icons.validate} lines={["数据验", "证"]} caret />
            <BigButton w={50} icon={icons.consolidate} lines={["合并计算"]} />
            <BigButton w={46} icon={icons.relations} lines={["关系"]} disabled />
            <BigButton w={38} icon={icons.model} lines={["管理数", "据模型"]} />
          </Group>
          <Group label="预测" pad={4} end={4}>
            <BigButton w={52} icon={icons.whatIf} lines={["模拟分析"]} caret />
            <BigButton w={44} icon={icons.forecast} lines={["预测", "工作表"]} />
          </Group>
          <Group label="分级显示" pad={4} end={12} launcher>
            <BigButton w={42} icon={icons.group} lines={["创建组"]} caret />
            <BigButton w={52} icon={icons.ungroup} lines={["取消组合"]} caret />
            <BigButton w={53} icon={icons.subtotal} lines={["分类汇总"]} />
            <SmallColumn>
              <SmallButton icon={smallIcons.showDetail} disabled>显示明细数据</SmallButton>
              <SmallButton icon={smallIcons.hideDetail} disabled>隐藏明细数据</SmallButton>
            </SmallColumn>
          </Group>
          <Group label="发票查验" pad={2} end={3}>
            <BigButton w={50} icon={icons.invoice} lines={["发票", "查验"]} />
          </Group>
          <Collapse aria-label="折叠功能区">
            <svg width="9" height="6" viewBox="0 0 9 6" fill="none" stroke="#666" strokeWidth="1.800"><path d="M1 5l3.500-3.500L8 5" /></svg>
          </Collapse>
        </Ribbon>

        <QuickAccess>
          <QuickButton $after={36} aria-label="保存">
            <svg width="14" height="14" viewBox="0 0 14 14"><path d="M0 0h14v14H0z" fill="#8458a8" /><path d="M2 1h10v6H2zM4 9h7v5H4z" fill="#fff" /><path d="M5 11h2v3H5z" fill="#8458a8" /></svg>
          </QuickButton>
          <QuickButton $after={21} aria-label="恢复">
            <svg width="15" height="13" viewBox="0 0 15 13" fill="none" stroke="#b4b4b4" strokeWidth="2"><path d="M9 1l4 3.500-4 3.500M13 4.500H5a3.700 3.700 0 0 0 0 7.500h2" /></svg>
            <Caret color="#c4c4c4" />
          </QuickButton>
          <QuickButton $after={25} aria-label="撤消">
            <svg width="15" height="13" viewBox="0 0 15 13" fill="none" stroke={BLUE} strokeWidth="2.300"><path d="M6 1L2 4.500 6 8M2 4.500h8a3.700 3.700 0 0 1 0 7.500H8" /></svg>
            <Caret />
          </QuickButton>
          <QuickButton $after={38} aria-label="快速打印">
            <svg width="16" height="16" viewBox="0 0 16 16" fill="none" stroke="#666"><path d="M4 12.500H.500V.500H8L11.500 4v2M7.500.500v4" /><path d="M3.500 10V3" stroke={BLUE} /><path d="M5.500 9.500h10v4h-10z" fill="#bbb" /><path d="M7.500 6.500h6v3h-6zM7.500 12.500h6v3h-6z" fill="#fff" /></svg>
          </QuickButton>
          <QuickButton $after={0} aria-label="打印预览">
            <svg width="15" height="16" viewBox="0 0 15 16" fill="none" stroke="#666"><path d="M.500.500h9l3 3v12H.500z" fill="#f8f8f8" /><circle cx="8" cy="8" r="3.500" fill="#fff" strokeWidth="1.700" /><path d="M10.500 10.500l4 4" strokeWidth="2" /></svg>
          </QuickButton>
        </QuickAccess>

        <FormulaBar>
          <NameBox>
            <input aria-label="名称框" defaultValue="E11" />
            <svg width="7" height="4" viewBox="0 0 7 4"><path d="M0 0h7L3.500 4z" fill="#666" /></svg>
          </NameBox>
          <Dots><svg width="2" height="11" viewBox="0 0 2 11" fill="#aaa"><path d="M0 0h2v2H0zM0 4h2v2H0zM0 9h2v2H0z" /></svg></Dots>
          <FxBox>
            <button aria-label="取消"><svg width="11" height="10" viewBox="0 0 11 10" stroke="#bdbdbd" strokeWidth="1.800"><path d="M1 0l9 10M10 0L1 10" /></svg></button>
            <button aria-label="输入"><svg width="13" height="11" viewBox="0 0 13 11" fill="none" stroke="#bdbdbd" strokeWidth="2"><path d="M1 6l4 4 7-9" /></svg></button>
            <button aria-label="插入函数">
              <svg width="13" height="14" viewBox="0 0 13 14" fill="#555" fontFamily="Liberation Serif" fontStyle="italic" fontWeight="700"><text x="1" y="11" fontSize="14">f</text><text x="6" y="11" fontSize="11">x</text></svg>
            </button>
          </FxBox>
          <FormulaInput>
            <input aria-label="编辑栏" />
            <svg width="8" height="6" viewBox="0 0 8 6" fill="none" stroke="#666" strokeWidth="2"><path d="M1 1l3 3 3-3" /></svg>
          </FormulaInput>
        </FormulaBar>

        <Sheet>
          <GridArea>
            <Grid>
              <colgroup>
                <Col $w={29} />
                {columns.map((c) => <Col key={c} $w={c === "C" ? 160 : 72} />)}
                <Col />
              </colgroup>
              <thead>
                <tr>
                  <HeadCell><svg width="11" height="11" viewBox="0 0 11 11"><path d="M11 0v11H0z" fill="#b3b3b3" /></svg></HeadCell>
                  {columns.map((c) => <HeadCell key={c} $on={c === "E"}>{c}</HeadCell>)}
                  <HeadCell $bare />
                </tr>
              </thead>
              <tbody>
                {Array.from({ length: 27 }, (_, i) => i + 1).map((n) => (
                  <Row key={n} $h={rowHeight(n)}>
                    <RowHead $on={n === 11}>{n < 27 ? n : null}</RowHead>
                    {columns.map((c) => (
                      <Cell key={c} $big={n <= 2}>
                        {values[c + n]}
                        {c === "E" && n === 11 && <Selection />}
                      </Cell>
                    ))}
                    <Cell />
                  </Row>
                ))}
              </tbody>
            </Grid>
          </GridArea>
          <VScroll>
            <ScrollButton aria-label="向上滚动"><svg width="7" height="4" viewBox="0 0 7 4"><path d="M0 4h7L3.500 0z" fill="#666" /></svg></ScrollButton>
            <VThumb />
            <Spacer />
            <ScrollButton aria-label="向下滚动"><svg width="7" height="4" viewBox="0 0 7 4"><path d="M0 0h7L3.500 4z" fill="#666" /></svg></ScrollButton>
          </VScroll>
        </Sheet>

        <SheetBar>
          <SheetNav>
            <button aria-label="上一个工作表"><svg width="4" height="7" viewBox="0 0 4 7"><path d="M4 0v7L0 3.500z" fill="#bdbdbd" /></svg></button>
            <button aria-label="下一个工作表"><svg width="4" height="7" viewBox="0 0 4 7"><path d="M0 0v7l4-3.500z" fill="#bdbdbd" /></svg></button>
          </SheetNav>
          {sheets.map((s) => (
            <SheetTab key={s.name} $w={s.w} $tint={s.tint} $active={s.active}>{s.name}</SheetTab>
          ))}
          <AddSheet aria-label="新工作表">
            <svg width="16" height="16" viewBox="0 0 16 16" fill="none" stroke="#777"><circle cx="8" cy="8" r="7.500" /><path d="M4 8h8M8 4v8" strokeWidth="2" /></svg>
          </AddSheet>
          <HScroll>
            <HGrip><svg width="2" height="11" viewBox="0 0 2 11" fill="#aaa"><path d="M0 0h2v2H0zM0 4h2v2H0zM0 9h2v2H0z" /></svg></HGrip>
            <ScrollButton aria-label="向左滚动"><svg width="4" height="7" viewBox="0 0 4 7"><path d="M4 0v7L0 3.500z" fill="#555" /></svg></ScrollButton>
            <HThumb />
            <Spacer />
            <ScrollButton aria-label="向右滚动"><svg width="4" height="7" viewBox="0 0 4 7"><path d="M0 0v7l4-3.500z" fill="#555" /></svg></ScrollButton>
          </HScroll>
        </SheetBar>

        <StatusBar>
          <StatusText $after={16}>就绪</StatusText>
          <StatusText $after={19}>循环引用</StatusText>
          <StatusText $after={17}>数字</StatusText>
          <svg width="13" height="13" viewBox="0 0 13 13" fill="none" stroke="#777"><path d="M7 2.500h5.500v10h-10V7M5 5.500h7M5 7.500h1M7.500 7.500h1M10 7.500h1M5 10h1M7.500 10h1M10 10h1" /><circle cx="3" cy="3" r="3" fill="#777" stroke="none" /></svg>
          <Spacer />
          <ViewButton $on aria-label="普通视图"><svg width="13" height="13" viewBox="0 0 13 13" fill="none" stroke="#666"><path d="M.500.500h12v12H.500zM0 4.500h13M0 8.500h13M4.500 0v13M8.500 0v13" /></svg></ViewButton>
          <ViewButton aria-label="页面布局视图"><svg width="13" height="13" viewBox="0 0 13 13" fill="none" stroke="#666"><path d="M.500.500h12v12H.500zM3.500 2.500h6v8h-6zM5 4.500h3M5 6.500h3M5 8.500h3" /></svg></ViewButton>
          <ViewButton aria-label="分页预览"><svg width="13" height="13" viewBox="0 0 13 13" fill="none" stroke="#666"><path d="M.500.500h12v12H.500zM4.500 0v7.500M0 7.500h8.500V0" /></svg></ViewButton>
          <ZoomGroup>
            <ZoomStep aria-label="缩小"><svg width="6" height="2" viewBox="0 0 6 2"><path d="M0 0h6v2H0z" fill="#555" /></svg></ZoomStep>
            <ZoomSlider type="range" min={0} max={200} defaultValue={100} aria-label="显示比例" />
            <ZoomStep aria-label="放大"><svg width="8" height="8" viewBox="0 0 8 8"><path d="M3 0h2v3h3v2H5v3H3V5H0V3h3z" fill="#555" /></svg></ZoomStep>
            <ZoomValue>100%</ZoomValue>
          </ZoomGroup>
        </StatusBar>

        <Arrow width="60" height="108" viewBox="0 0 60 108">
          <path d="M2.500 4.500l3-1.500 38 77-3.500 2z" fill="#e01010" />
          <path d="M36 84.500l12.500-6 4.500 27z" fill="#f01414" />
        </Arrow>
        <ImeBar>
          <ImeMode>CH</ImeMode>
          <svg width="11" height="12" viewBox="0 0 11 12" fill="none" stroke="#444" strokeWidth="1.300"><path d="M5 1c2 4 0 8-4 8 3 3 9 2 9-3 0-3-2-5-5-5z" /></svg>
          简
        </ImeBar>
        <ImeTip role="tooltip">中/英文(Shift)</ImeTip>
        <Pointer width="13" height="20" viewBox="0 0 13 20"><path d="M.500.500v16l4-3.500 2.500 6 2.500-1-2.500-6h5z" fill="#fff" stroke="#222" /></Pointer>

        <Watermark>
          <svg width="44" height="42" viewBox="0 0 44 42">
            <path d="M40 1C22-1 6 8 3 20c-2 7 3 10 8 9C8 18 18 7 40 1z" fill="#4b9fe0" />
            <path d="M11 26c0-9 9-14 17-12 6 2 4 9-4 12-3 1-6 0-6-3 3 1 8-1 8-4-1-4-10-1-11 7z" fill="#3d8fd6" />
            <path d="M33 13c6 8-1 22-22 24 5-3 16-10 20-18z" fill="#4cb86a" />
            <path d="M35 18c2 9-7 20-22 22 8-3 18-10 22-22z" fill="#b9d43a" />
          </svg>
          <WatermarkText><span>极光下载站</span><span>www.xz7.com</span></WatermarkText>
        </Watermark>
      </Window>
    </Edge>
  );
}
